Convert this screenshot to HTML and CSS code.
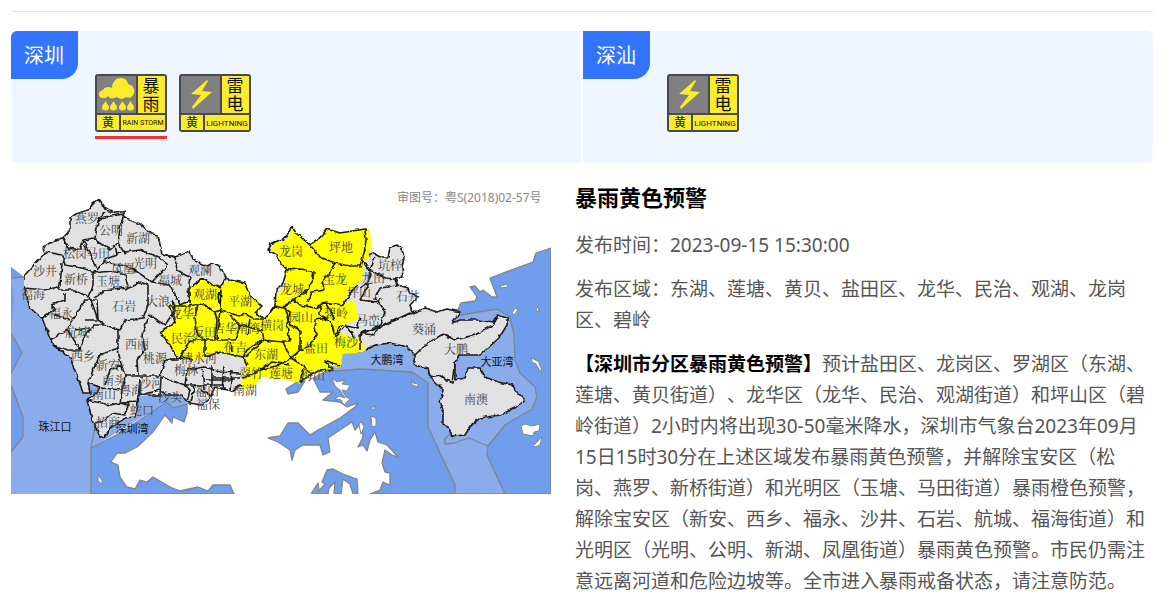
FILE: index.html
```html
<!DOCTYPE html>
<html lang="zh-CN">
<head>
<meta charset="utf-8">
<meta name="viewport" content="width=device-width, initial-scale=1">
<title>暴雨黄色预警</title>
<link rel="stylesheet" href="styles.css">
</head>
<body>
<main class="page">
  <div class="areas">
    <section class="area area-first">
      <h2 class="area-name">深圳</h2>
      <div class="signals">
        <button class="signal signal-active" type="button" aria-label="暴雨黄色预警">
          <svg class="signal-icon" viewBox="0 0 72 58">
            <rect width="72" height="58" rx="3" fill="#48484e"/>
            <rect x="2" y="2" width="39" height="37" fill="#808080"/>
            <rect x="43" y="2" width="27" height="37" fill="#faec2d"/>
            <rect x="2" y="41" width="22" height="15" fill="#faec2d"/>
            <rect x="26" y="41" width="44" height="15" fill="#faec2d"/>
            <path d="M8 24C3 24 2 17 8 16C9 13 14 12 17 14C17 9 20 4 26 4C31 4 33 8 33 10C38 11 40 15 39 19C38 23 34 25 31 23C28 26 24 25 22 23C18 25 15 25 13 22C12 24 10 24 8 24Z" fill="#faec2d"/>
            <path id="drop" d="M10.500 27C9 30 7 31 7 33.500A3.500 3 0 0 0 14 33.500C14 31 12 30 10.500 27Z" fill="#faec2d"/>
            <use href="#drop" x="8"/><use href="#drop" x="17"/><use href="#drop" x="25"/>
            <text class="signal-char" x="56" y="18">暴</text>
            <text class="signal-char" x="56" y="36">雨</text>
            <text class="signal-level" x="13" y="53">黄</text>
            <text class="signal-en signal-en-small" x="48" y="51">RAIN STORM</text>
          </svg>
        </button>
        <button class="signal" type="button" aria-label="雷电黄色预警">
          <svg class="signal-icon" viewBox="0 0 72 58">
            <g id="lightning">
              <rect width="72" height="58" rx="3" fill="#48484e"/>
              <rect x="2" y="2" width="39" height="37" fill="#808080"/>
              <rect x="43" y="2" width="27" height="37" fill="#faec2d"/>
              <rect x="2" y="41" width="22" height="15" fill="#faec2d"/>
              <rect x="26" y="41" width="44" height="15" fill="#faec2d"/>
              <path d="M28 6L12 20L22 21L13 33L14 35L33 18L23 17L29 7Z" fill="#faec2d"/>
              <text class="signal-char" x="56" y="18">雷</text>
              <text class="signal-char" x="56" y="36">电</text>
              <text class="signal-level" x="13" y="53">黄</text>
              <text class="signal-en" x="48" y="52">LIGHTNING</text>
            </g>
          </svg>
        </button>
      </div>
    </section>
    <section class="area area-last">
      <h2 class="area-name">深汕</h2>
      <div class="signals">
        <button class="signal" type="button" aria-label="雷电黄色预警">
          <svg class="signal-icon" viewBox="0 0 72 58"><use href="#lightning"/></svg>
        </button>
      </div>
    </section>
  </div>

  <div class="detail">
    <svg class="map" viewBox="11 181 540 313" role="img" aria-label="深圳市分区预警地图">
      <defs>
        <filter id="rough" x="0" y="0" width="1" height="1">
          <feTurbulence type="fractalNoise" baseFrequency=".18" numOctaves="2" seed="4"/>
          <feDisplacementMap in="SourceGraphic" scale="4" xChannelSelector="R" yChannelSelector="G"/>
        </filter>
      </defs>
      <!-- sea -->
      <path fill="#8aaceb" d="M11 267L24 277L60 300L100 350L110 390L137 403L167 402L91 448V494H11Z"/>
      <path fill="#709eec" d="M11 267L24 277L11 278ZM11 278L14 300L11 333L22 353L11 373ZM11 385L23 417V437L11 452Z"/>
      <path fill="#8aaceb" d="M91 448L167 402L173 408L188 404L182 394L130 396L94 425Z"/>
      <g stroke="#7d858f" stroke-width="1.300" stroke-linejoin="round">
        <path fill="#709eec" d="M91 494V448L120 433L167 402L173 408L187 404L187 413L184 422L173 417L172 423L165 415L153 432L137 447L125 453L117 453L111 462L118 465L120 477L127 487L135 489L140 480L147 482L153 477L170 487L180 491L198 487L208 491L213 485H230L234 494Z"/>
        <path fill="#709eec" d="M551 248L536 253L533 262L490 278L497 297L492 297L483 290L480 292L475 286L470 287L477 297L475 301L461 303L452 323L420 335L340 345L325 372L313 378L320 392H333L323 400L340 402L347 407L358 403L355 407L340 418L318 430L310 435L298 423H288L280 436L268 438L278 442L290 450L292 460L295 450L303 445H320L323 455L330 452L328 438L340 430L352 422L355 430L362 422L363 437L358 447L363 445L367 451L370 440L375 432L378 442L387 445L398 457L392 455L385 450L382 463L385 472L390 473V485L383 482L380 490L370 494H551Z"/>
        <path fill="#709eec" d="M286 389L297 382L305 381L298 392L288 394ZM311 494L318 483L319 491L325 484L322 482L327 470L333 469L343 474L357 479L358 494H353L350 484L343 479L341 494H334L335 482L329 488L328 494Z"/>
        <path fill="#8aaceb" d="M325 372L360 369L412 372L428 383V427L455 485V494H505L487 455L488 446L505 425L532 409L537 397L535 387L520 373L515 360L514 335L510 317L497 309L461 315L420 330L345 345Z"/>
        <path fill="none" d="M451 433L445 439V444L454 443L469 438L488 446M11 278L24 277M11 333L22 353L11 373M11 385L23 417V437L11 452M91 448L95 426"/>
      </g>
      <!-- islands -->
      <g fill="#fff" stroke="#7d858f">
        <path d="M500 286L508 284L507 287L501 288ZM512 313L515 308L518 310L514 315ZM536 310L538 306L539 312ZM531 358L538 361L542 370L540 371L536 364L532 362ZM521 426L525 424L532 426L540 424L539 431L534 432L533 436L523 434ZM533 446L542 437L540 445L535 447ZM411 379L413 383L418 384V387L412 385ZM98 475L102 480L102 484L98 481ZM371 408L375 406L374 410ZM371 416L376 418V426L372 427ZM361 421L364 427L361 434L359 425ZM332 378L337 382L345 380L342 384L350 385L347 391L342 390L346 397L350 399L344 405L341 400L335 399L339 396L345 398L340 390L335 386Z"/>
      </g>
      <!-- districts -->
      <g filter="url(#rough)" stroke="#1c1c1c" stroke-width="1.600" stroke-linejoin="round">
        <path fill="#e1e1e1" stroke="none" d="M24 276L32 267L45 253L43 248L48 244L55 240L63 238L70 230V218L76 214L88 210L93 204L99 199L104 206L108 212H124L125 218L140 224L152 234L158 235L162 254L175 257L183 254L190 251L193 259L207 266L213 263L220 266L226 278L230 280L245 283L250 295L262 306L255 313L265 319L275 305L276 290L283 283L287 270L280 262L277 255L268 250L270 244L285 238L292 227L297 234L310 245L318 240L327 229L340 233L365 229L368 240V252L373 253L380 257H388L390 248L396 245L402 248L404 258L402 267L403 277L395 279L398 285L408 288L410 293L418 297L410 305L412 313L425 308L437 312L447 309L460 312L452 323L460 320H477L493 322L497 315L507 318V325L499 338L480 355H460L455 362V380L465 378L468 368H480L485 377L498 382L513 385L515 390L525 400L515 408L500 415L480 418L470 427L465 435L452 436L448 427L443 425V410L440 402L443 390L430 377L428 368L413 365L415 355L407 347L390 343L375 345L362 352L342 353L340 367L325 363L333 370L318 371L300 382L290 380L260 376L252 388L240 385L232 391L215 387L210 397L200 405L187 402L182 395H165L160 390L138 396L137 403L135 417L125 418L110 428L105 437L100 438L97 430L93 423L87 400L97 393L100 387L88 383L90 393H83L78 378L70 358L53 345L42 318L30 308L24 288Z"/>
        <path fill="#ff0" stroke="#ff0" d="M190 287L203 279L213 285L220 288L230 280L245 283L250 295L262 306L257 313L266 320L275 305L279 295L286 285L288 270L282 262L278 253L272 249L272 245L288 240L293 228L297 234L310 245L320 240L330 229L340 233L368 229L370 240V252L364 262L361 280L347 292L342 302L355 303L357 318L340 325L338 333L355 338L364 345L362 352L342 353L340 367L325 363L333 370L318 371L300 382L290 380L260 376L252 388L240 387L243 378L247 365L243 357L220 352L205 357L193 360L180 358L170 345L160 332L175 322L170 306L190 303Z"/>
        <g fill="none">
          <!-- outer coastline and city limits -->
          <path d="M243 386L240 385L232 391L215 387L210 397L200 405L187 402L182 395H165L160 390L138 396L137 403L135 417L125 418L110 428L105 437L100 438L97 430L93 423L87 400L97 393L100 387L88 383L90 393H83L78 378L70 358L53 345L42 318L30 308L24 288V276L32 267L45 253L43 248L48 244L55 240L63 238L70 230V218L76 214L88 210L93 204L99 199L104 206L108 212H124L125 218L140 224L152 234L158 235L162 254L175 257L183 254L190 251L193 259L207 266L213 263L220 266L226 278L230 280L245 283L250 295L262 306L255 313L265 319L275 305L276 290L283 283L287 270L280 262L277 255L268 250L270 244L285 238L292 227L297 234L310 245L318 240L327 229L340 233L365 229L366 240L364 254M368 255L373 253L380 257H388L390 248L396 245L402 248L404 258L402 267L403 277L395 279L398 285L408 288L410 293L418 297L410 305L412 313L425 308L437 312L447 309L460 312L452 323L460 320H477L493 322L497 315L507 318V325L499 338L480 355H460L455 362V380L465 378L468 368H480L485 377L498 382L513 385L515 390L525 400L515 408L500 415L480 418L470 427L465 435L452 436L448 427L443 425V410L440 402L443 390L430 377L428 368L413 365L415 355L407 347L390 343L375 345L366 350M340 366L325 360L333 370L318 371L300 382M103 206L116 213L126 211"/>
          <path d="M104 212L98 222L95 238L83 240L80 250L68 248L63 238M98 222L104 217L124 214L120 228L118 243L110 250L92 238M83 240L90 255L97 270L105 260L117 255L115 245M46 252L62 255L65 265L82 268L95 272M62 263L60 285L58 290H75L88 297L93 285V273M117 253L140 250L160 258L168 265L152 282M105 262L130 267L152 282M93 273L112 271L125 275L128 287L105 290L95 298M118 243L125 254M162 254L175 257L177 270L190 277L188 290L190 300L180 305L170 285L152 282M24 288L45 290L58 287"/>
          <path d="M42 318L55 310L52 305L65 300V293M50 340L68 330L72 320L85 300L97 300L98 320L105 325L120 330L125 320L143 318L148 305V285L140 282L125 290M70 320L55 315M68 330L80 350M53 345L68 350L80 350L85 335L95 325L105 325M90 297L98 320M148 315L165 325L175 310L172 300M118 330L118 348L100 355L93 370L88 383M118 348L120 360L125 376H138L137 360L145 350L142 335L148 318M105 385L110 370L122 365M125 376L122 390L101 388M138 376H160L165 360H178L170 345L160 332M140 378L138 402L120 403L122 390M140 378V395H160L161 377M87 400L110 405L120 403L128 405L125 415L112 413L104 420L95 423M75 330L90 328M85 320L98 320"/>
          <path d="M161 377L185 385L187 370L205 367L220 372L240 373M185 385H224M202 369L204 390M212 365V388M224 366L222 390M232 370L230 390M185 385L190 390L187 402M195 385L190 405M212 378H240M165 360L180 358L193 360M205 380H235M200 390L210 395"/>
          <path d="M190 287L203 279L213 285L220 288L226 278M190 303L190 287M170 306H190L198 304L205 305L215 312L220 310L221 290L218 297L221 311L240 316L245 314L255 319L265 319M170 306L175 322L160 332M198 304L195 318L198 335L205 340L215 340L217 320L215 312M220 310L218 330L217 340M180 358L190 340L205 340L205 357M217 340L235 340L240 325L230 315M240 325L262 330L264 340L245 357M205 357L220 352L243 357L247 350L262 340L283 342L291 358L280 365L260 370L243 378M265 319L275 306L284 308L290 312L287 325L290 342L283 342M230 342L232 352M247 365L243 357M260 370L272 362L290 365M250 319L247 335"/>
          <path d="M286 270L300 269L314 272L312 282L305 293L293 300L283 307M284 308L293 299L300 305L315 308L325 302L343 305L349 295L357 285M310 245L320 257L335 263L350 266L360 266L364 254M335 263L328 275L322 283L325 290L312 292L308 302M320 305L320 315L328 320L333 328L335 337L340 325M328 318L315 320L314 328L317 335L310 345L300 350L291 358M291 358L302 365L312 375M305 365L300 382M335 337L345 325L355 338M360 335V350M340 325L357 328L360 318M285 310L290 325L300 330L300 350M325 302L335 320"/>
          <path d="M362 260L370 272L368 283L360 288M375 257L370 270L383 277L386 278L395 279M370 283L360 300L378 302L382 298M395 279L397 286L380 288L375 298L385 312L380 325L360 335M385 325L410 313L380 327L372 335L360 333M412 313L380 327L360 333M415 355L425 345L443 334L455 340L475 335L493 325L497 318M430 377L440 375L452 383L455 362"/>
        </g>
      </g>
      <g class="district-label">
        <text x="87" y="223">燕罗</text><text x="111" y="235">公明</text><text x="138" y="243">新湖</text>
        <text x="75" y="258">松岗</text><text x="98" y="258">马田</text><text x="145" y="268">光明</text>
        <text x="45" y="276">沙井</text><text x="123" y="273">凤凰</text><text x="76" y="284">新桥</text>
        <text x="108" y="286">玉塘</text><text x="170" y="285">福城</text><text x="200" y="275">观澜</text>
        <text x="33" y="299">福海</text><text x="124" y="311">石岩</text><text x="158" y="306">大浪</text>
        <text x="61" y="318">福永</text><text x="77" y="337">航城</text><text x="83" y="361">西乡</text>
        <text x="137" y="349">西丽</text><text x="108" y="370">新安</text><text x="155" y="363">桃源</text>
        <text x="114" y="385">南头</text><text x="151" y="388">沙河</text><text x="104" y="399">南山</text>
        <text x="131" y="395">粤海</text><text x="142" y="415">蛇口</text><text x="108" y="427">招商</text>
        <text x="170" y="402">沙头</text><text x="186" y="375">梅林</text><text x="199" y="363">清水河</text>
        <text x="207" y="396">福田</text><text x="208" y="409">福保</text><text x="245" y="395">南湖</text>
        <text x="205" y="299">观湖</text><text x="240" y="306">平湖</text><text x="182" y="318">龙华</text>
        <text x="183" y="343">民治</text><text x="204" y="337">坂田</text><text x="225" y="333">吉华</text>
        <text x="248" y="333">南湾</text><text x="235" y="352">布吉</text><text x="272" y="330">横岗</text>
        <text x="266" y="359">东湖</text><text x="251" y="378">翠竹</text><text x="281" y="378">莲塘</text>
        <text x="313" y="380">海山</text><text x="316" y="353">盐田</text><text x="346" y="347">梅沙</text>
        <text x="301" y="322">园山</text><text x="336" y="318">碧岭</text><text x="292" y="294">龙城</text>
        <text x="335" y="284">宝龙</text><text x="291" y="256">龙岗</text><text x="341" y="252">坪地</text>
        <text x="390" y="270">坑梓</text><text x="373" y="283">龙田</text><text x="359" y="297">坪山</text>
        <text x="408" y="301">石井</text><text x="368" y="325">马峦</text><text x="424" y="334">葵涌</text>
        <text x="456" y="354">大鹏</text><text x="476" y="404">南澳</text>
      </g>
      <g class="water-label">
        <text x="55" y="431">珠江口</text><text x="132" y="433">深圳湾</text><text x="387" y="364">大鹏湾</text><text x="497" y="366">大亚湾</text>
      </g>
      <text class="map-number" x="397" y="202">审图号：粤S(2018)02-57号</text>
    </svg>

    <article class="notice">
      <h1 class="notice-title">暴雨黄色预警</h1>
      <p class="notice-line">发布时间：2023-09-15 15:30:00</p>
      <p class="notice-line">发布区域：东湖、莲塘、黄贝、盐田区、龙华、民治、观湖、龙岗区、碧岭</p>
      <p class="notice-line"><strong class="notice-lead">【深圳市分区暴雨黄色预警】</strong>预计盐田区、龙岗区、罗湖区（东湖、莲塘、黄贝街道）、龙华区（龙华、民治、观湖街道）和坪山区（碧岭街道）2小时内将出现30-50毫米降水，深圳市气象台2023年09月15日15时30分在上述区域发布暴雨黄色预警，并解除宝安区（松岗、燕罗、新桥街道）和光明区（玉塘、马田街道）暴雨橙色预警，解除宝安区（新安、西乡、福永、沙井、石岩、航城、福海街道）和光明区（光明、公明、新湖、凤凰街道）暴雨黄色预警。市民仍需注意远离河道和危险边坡等。全市进入暴雨戒备状态，请注意防范。</p>
    </article>
  </div>
</main>
</body>
</html>
```
FILE: styles.css
```css
* {
  box-sizing: border-box;
}

body {
  margin: 0;
  background: #fff;
  color: #555;
  font-family: "Noto Sans", "Noto Sans CJK SC", sans-serif;
  text-spacing-trim: space-all;
}

.page {
  margin: 11px 17px 0 11px;
  border-top: 1px solid #e5e5e5;
  padding-top: 19px;
}

.areas {
  display: grid;
  grid-template-columns: 1fr 1fr;
  gap: 2px;
}

.area {
  display: flex;
  align-items: flex-start;
  gap: 17px;
  min-height: 132px;
  background: #eff6ff;
  overflow: hidden;
}

.area-first {
  border-radius: 6px 0 0 6px;
}

.area-last {
  border-radius: 0 6px 6px 0;
}

.area-name {
  margin: 0;
  padding: 0 14px 0 13px;
  border-radius: 0 0 16px 0;
  background: #3273ff;
  color: #fff;
  font-size: 20px;
  font-weight: 400;
  line-height: 50px;
  height: 48px;
}

.signals {
  display: flex;
  flex-wrap: wrap;
  gap: 12px;
  padding-top: 43px;
}

.signal {
  padding: 0 0 4px;
  border: 0;
  border-bottom: 3px solid transparent;
  background: none;
  cursor: pointer;
}

.signal-active {
  border-bottom-color: #f03434;
}

.signal-icon {
  display: block;
  width: 72px;
}

.signal-char,
.signal-level,
.signal-en {
  fill: #111;
  font-family: "Noto Sans CJK SC", sans-serif;
  text-anchor: middle;
}

.signal-char {
  font-size: 17px;
}

.signal-level {
  font-size: 12px;
}

.signal-en {
  font-family: Roboto, "Liberation Sans", sans-serif;
  font-size: 8px;
}

.signal-en-small {
  font-size: 7px;
}

.detail {
  display: grid;
  grid-template-columns: 540fr 578fr;
  align-items: start;
  gap: 24px;
  padding-top: 18px;
}

.map {
  display: block;
  width: 100%;
}

.district-label {
  fill: #444;
  font-family: "Noto Serif CJK SC", "Noto Sans CJK SC", serif;
  font-size: 12px;
  text-anchor: middle;
}

.water-label {
  fill: #111;
  font-size: 11px;
  text-anchor: middle;
}

.map-number {
  fill: #888;
  font-size: 12px;
}

.notice {
  padding-right: 2px;
}

.notice-title {
  margin: 0 0 16px;
  color: #000;
  font-size: 22px;
  line-height: 33px;
}

.notice-line {
  margin: 0 0 13px;
  font-size: 19px;
  line-height: 31px;
}

.notice-lead {
  color: #000;
}
```
